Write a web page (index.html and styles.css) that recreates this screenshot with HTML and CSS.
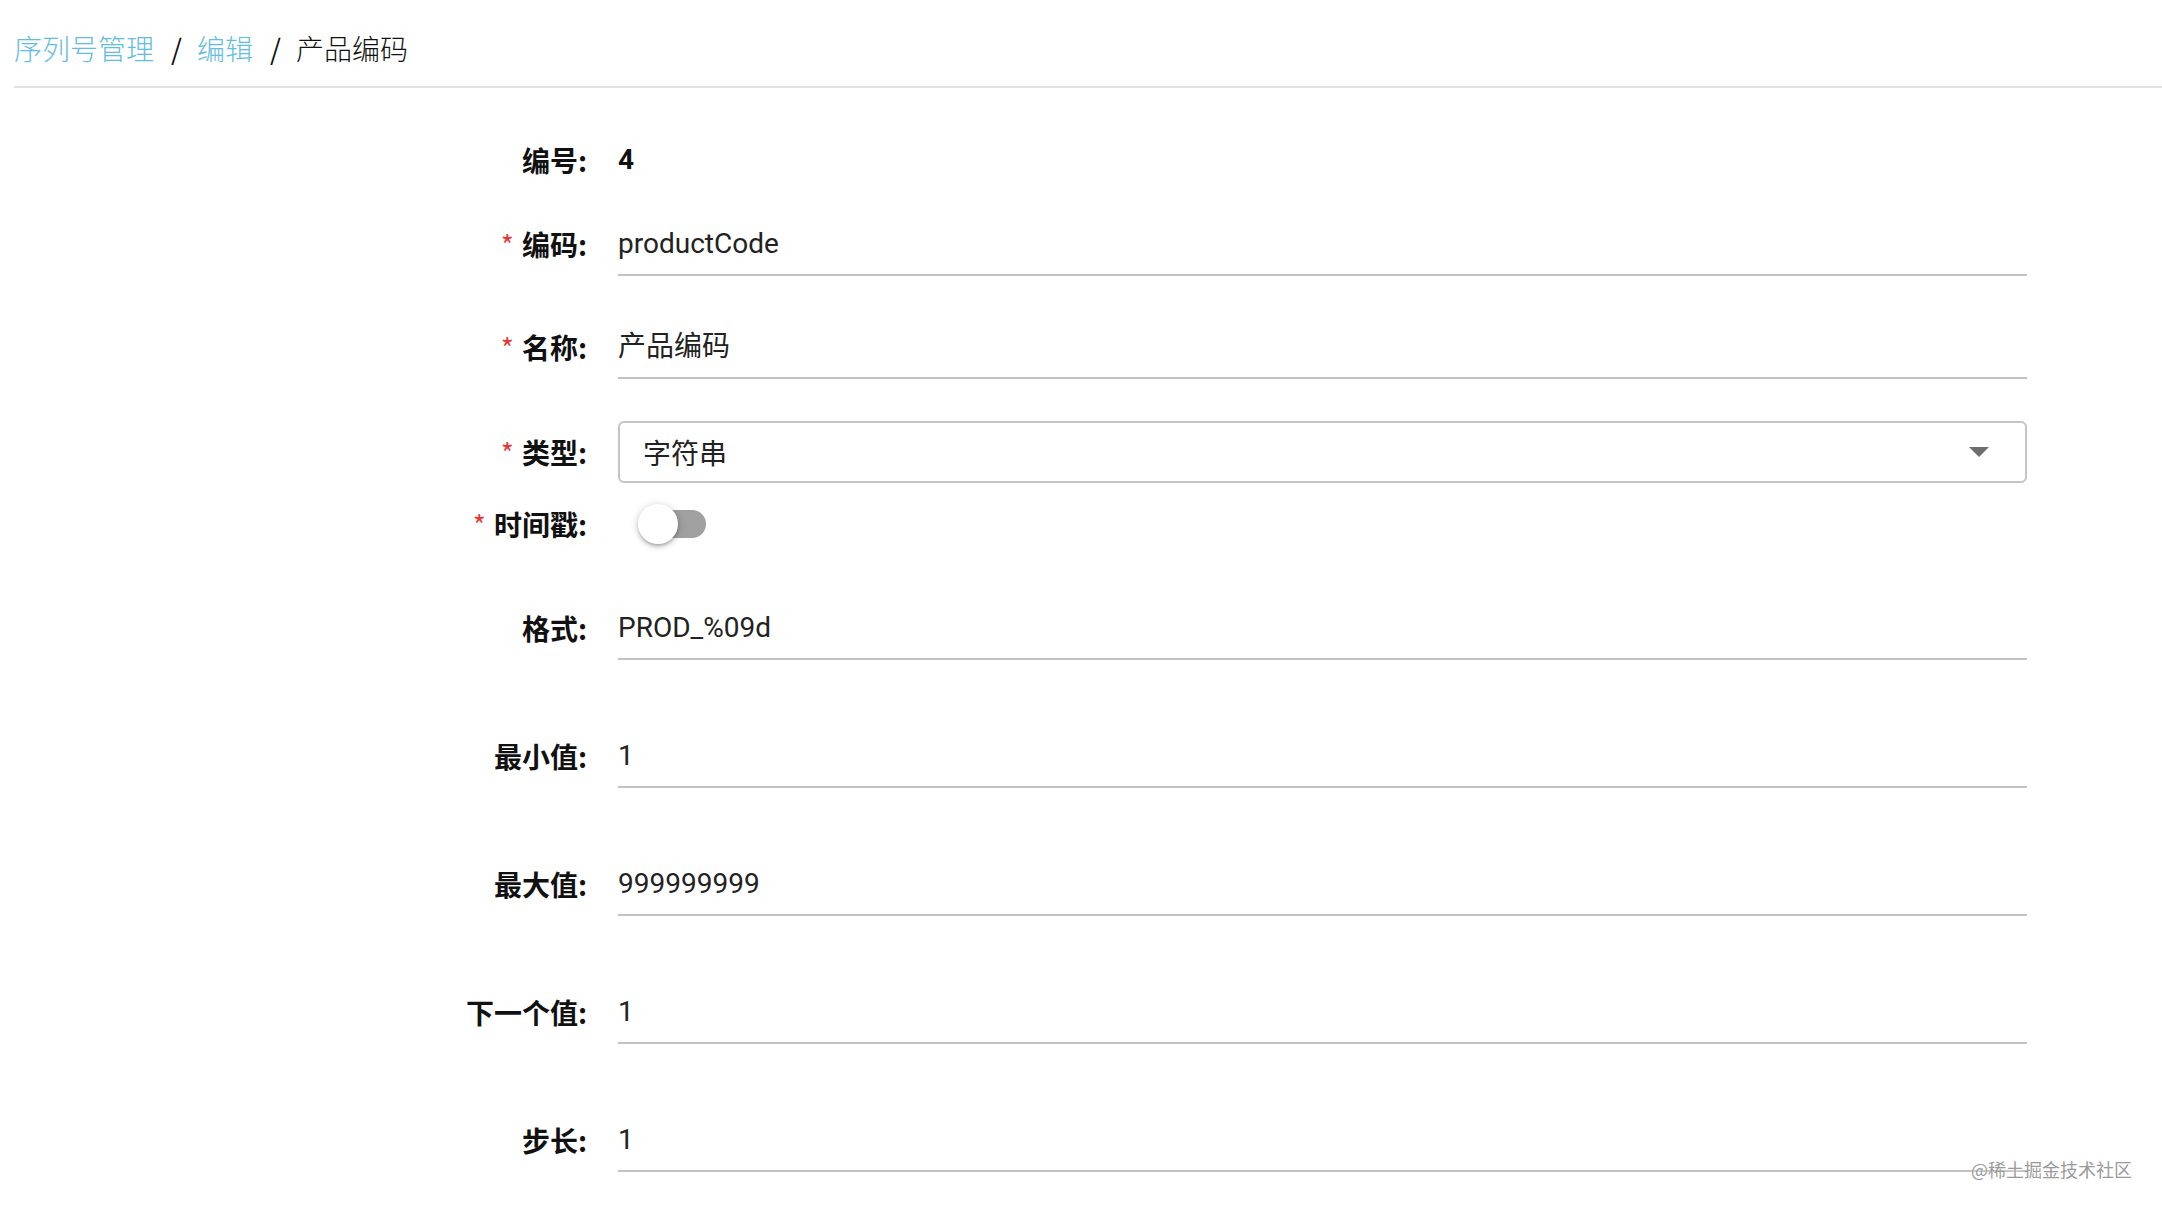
FILE: index.html
```html
<!DOCTYPE html>
<html lang="zh-CN">
<head>
<meta charset="utf-8">
<title>产品编码</title>
<link rel="stylesheet" href="styles.css">
</head>
<body>
<header class="crumbs">
  <a class="crumb-link">序列号管理</a><span class="sep">/</span><a class="crumb-link">编辑</a><span class="sep">/</span><span class="crumb-current">产品编码</span>
</header>
<main class="form">
  <div class="row row-first">
    <div class="label">编号:</div>
    <div class="static">4</div>
  </div>
  <div class="row gap-a">
    <div class="label"><span class="req">*</span>编码:</div>
    <div class="field">productCode</div>
  </div>
  <div class="row gap-b">
    <div class="label"><span class="req">*</span>名称:</div>
    <div class="field">产品编码</div>
  </div>
  <div class="row row-center gap-c">
    <div class="label"><span class="req">*</span>类型:</div>
    <div class="select"><span>字符串</span><span class="caret"></span></div>
  </div>
  <div class="row gap-d">
    <div class="label"><span class="req">*</span>时间戳:</div>
    <div class="switch"><span class="track"></span><span class="thumb"></span></div>
  </div>
  <div class="row gap-e">
    <div class="label">格式:</div>
    <div class="field">PROD_%09d</div>
  </div>
  <div class="row gap-f">
    <div class="label">最小值:</div>
    <div class="field">1</div>
  </div>
  <div class="row gap-f">
    <div class="label">最大值:</div>
    <div class="field">999999999</div>
  </div>
  <div class="row gap-f">
    <div class="label">下一个值:</div>
    <div class="field">1</div>
  </div>
  <div class="row gap-f">
    <div class="label">步长:</div>
    <div class="field">1</div>
  </div>
</main>
<div class="watermark">@稀土掘金技术社区</div>
</body>
</html>
```
FILE: styles.css
```css
html, body {
  margin: 0;
  padding: 0;
  background: #ffffff;
}

body {
  position: relative;
  min-height: 1210px;
  font-family: "Roboto", "Noto Sans CJK SC", sans-serif;
  color: rgba(0, 0, 0, 0.87);
}

.crumbs {
  display: flex;
  align-items: center;
  height: 40px;
  margin-left: 14px;
  padding: 28px 0 18px;
  font-family: "Noto Sans CJK SC", sans-serif;
  font-size: 28px;
  font-weight: 300;
  line-height: 40px;
  border-bottom: 2px solid #e2e2e2;
  white-space: nowrap;
}

.crumb-link {
  color: #63bde0;
  text-decoration: none;
}

.crumb-current {
  color: #111111;
}

.sep {
  color: #111111;
  font-weight: 400;
  padding: 0 15px 0 17px;
}

.form {
  display: flex;
  flex-direction: column;
  padding-top: 52px;
}

.row {
  display: grid;
  grid-template-columns: 587px 1409px;
  column-gap: 31px;
  align-items: start;
}

.row-center {
  align-items: center;
}

.gap-a { margin-top: 44px; }
.gap-b { margin-top: 51px; }
.gap-c { margin-top: 42px; }
.gap-d { margin-top: 21px; }
.gap-e { margin-top: 64px; }
.gap-f { margin-top: 76px; }

.label {
  height: 40px;
  font-family: "Noto Sans CJK SC", sans-serif;
  font-size: 28px;
  line-height: 40px;
  font-weight: 700;
  text-align: right;
  color: #111111;
  white-space: nowrap;
}

.req {
  color: #e53935;
  font-weight: 400;
  margin-right: 8px;
}

.static {
  height: 40px;
  font-size: 28px;
  line-height: 40px;
  font-weight: 700;
  color: #111111;
}

.field {
  height: 40px;
  padding-bottom: 10px;
  font-size: 28px;
  line-height: 40px;
  border-bottom: 2px solid #c2c2c2;
  color: #222222;
  white-space: nowrap;
}

.select {
  display: flex;
  align-items: center;
  justify-content: space-between;
  height: 58px;
  padding: 0 36px 0 23px;
  border: 2px solid #c4c4c4;
  border-radius: 6px;
  font-size: 28px;
  color: #222222;
}

.caret {
  width: 0;
  height: 0;
  border-left: 10px solid transparent;
  border-right: 10px solid transparent;
  border-top: 10px solid #6e6e6e;
}

.switch {
  position: relative;
  width: 68px;
  height: 40px;
  margin-left: 20px;
}

.track {
  position: absolute;
  left: 4px;
  top: 6px;
  width: 64px;
  height: 28px;
  border-radius: 14px;
  background: #a0a0a0;
}

.thumb {
  position: absolute;
  left: 0;
  top: 0;
  width: 40px;
  height: 40px;
  border-radius: 50%;
  background: #ffffff;
  box-shadow: 0 3px 3px -1px rgba(0, 0, 0, 0.2), 0 2px 6px 0 rgba(0, 0, 0, 0.14), 0 1px 10px 0 rgba(0, 0, 0, 0.12);
}

.watermark {
  position: absolute;
  right: 30px;
  top: 1156px;
  font-family: "Noto Sans CJK SC", sans-serif;
  font-size: 18px;
  line-height: 26px;
  color: #9a9a9a;
  text-shadow: 0 1px 2px rgba(255, 255, 255, 0.9);
}
```
